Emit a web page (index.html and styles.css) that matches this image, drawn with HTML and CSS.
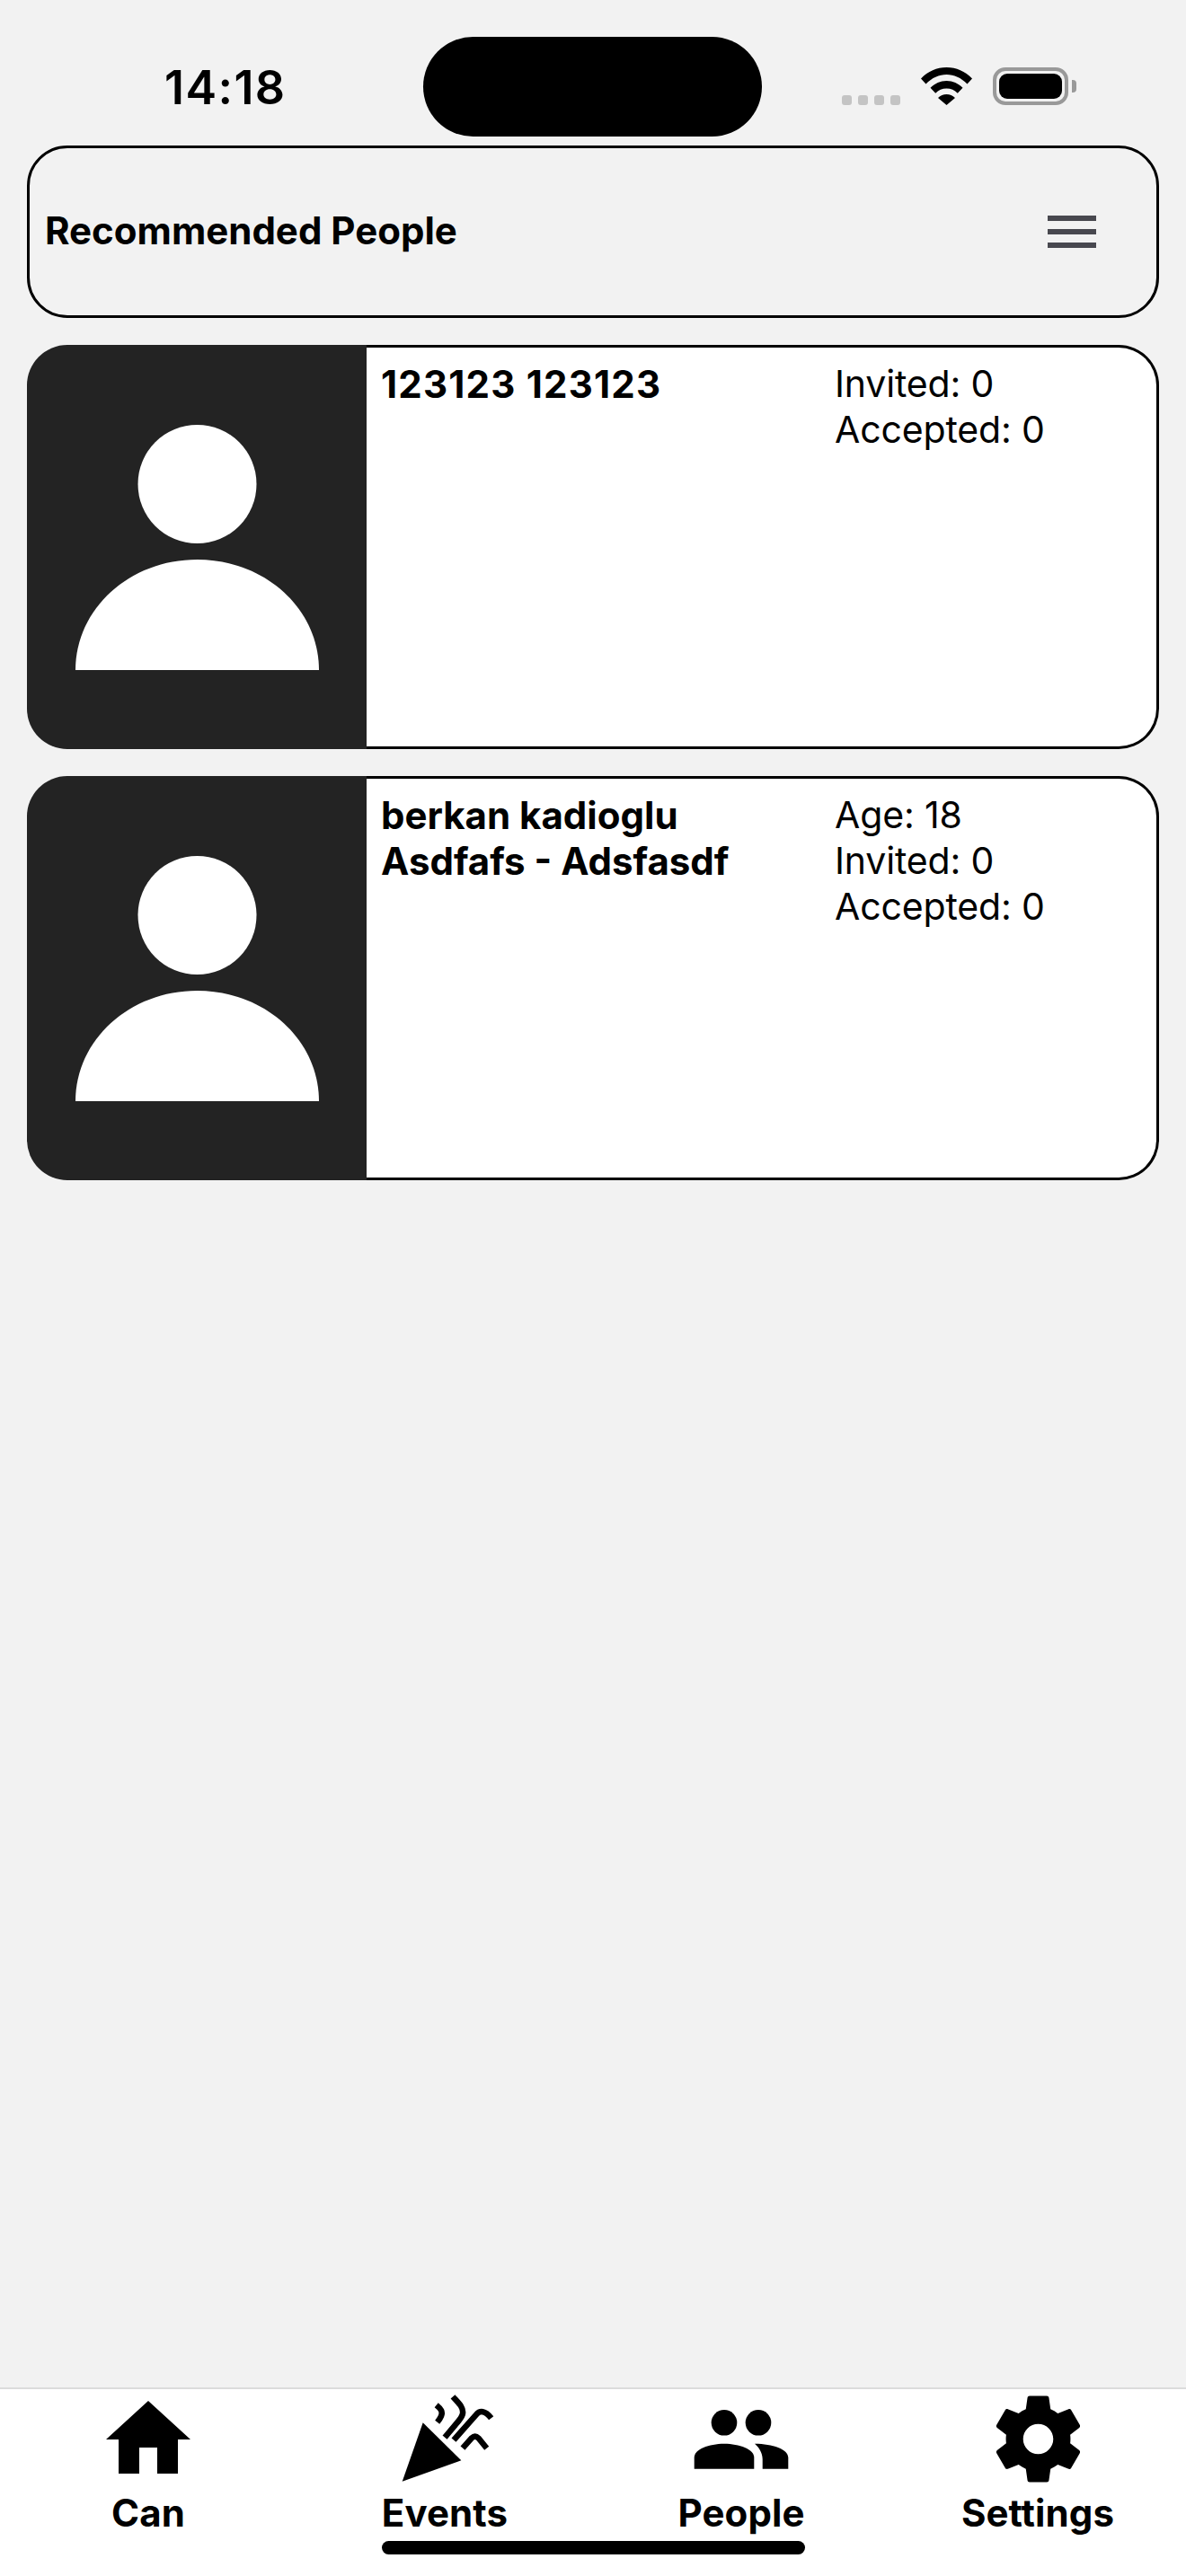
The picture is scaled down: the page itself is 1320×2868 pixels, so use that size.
FILE: index.html
```html
<!DOCTYPE html>
<html lang="en">
<head>
<meta charset="utf-8">
<title>Recommended People</title>
<link rel="stylesheet" href="styles.css">
</head>
<body>
<div class="app">
  <div class="status">
    <span class="time">14:18</span>
    <div class="island"></div>
    <div class="status-icons">
      <div class="dots"><i></i><i></i><i></i><i></i></div>
      <svg class="wifi" viewBox="0 0 57 42"><path d="M28.5 0C17.5 0 8 4.3 0 12.5l5.5 6C12.5 11.5 20 8 28.5 8s16 3.500 23 10.500l5.500-6C49 4.300 39.500 0 28.500 0zM28.500 15c-7 0-13 2.800-18 7.800l5.700 6C19.500 25.300 23.700 23.500 28.500 23.500s9 1.800 12.300 5.300l5.700-6c-5-5-11-7.800-18-7.800zM28.500 30c-3.700 0-6.800 1.300-9.500 4l9.500 8 9.500-8c-2.700-2.700-5.800-4-9.500-4z"/></svg>
      <div class="battery"><div class="battery-fill"></div></div>
      <div class="battery-nub"></div>
    </div>
  </div>

  <header class="title-bar">
    <h1>Recommended People</h1>
    <div class="menu"><i></i><i></i><i></i></div>
  </header>

  <main class="list">
    <article class="card">
      <div class="avatar">
        <svg viewBox="0 0 271 273"><ellipse cx="135.500" cy="66" rx="66" ry="66"/><path d="M0 273C0 205 60 150 135.500 150S271 205 271 273z"/></svg>
      </div>
      <div class="card-body">
        <div class="names"><p class="digits">123123 123123</p></div>
        <div class="stats"><p>Invited: 0</p><p>Accepted: 0</p></div>
      </div>
    </article>
    <article class="card">
      <div class="avatar">
        <svg viewBox="0 0 271 273"><ellipse cx="135.500" cy="66" rx="66" ry="66"/><path d="M0 273C0 205 60 150 135.500 150S271 205 271 273z"/></svg>
      </div>
      <div class="card-body">
        <div class="names"><p>berkan kadioglu</p><p>Asdfafs - Adsfasdf</p></div>
        <div class="stats"><p>Age: 18</p><p>Invited: 0</p><p>Accepted: 0</p></div>
      </div>
    </article>
  </main>

  <nav class="tabs">
    <div class="tab">
      <svg class="tab-icon" viewBox="0 0 120 100"><path d="M60 1 107 44H93V82H70V53H50V82H27V44H13z"/></svg>
      <span>Can</span>
    </div>
    <div class="tab">
      <svg class="tab-icon" viewBox="0 0 120 100"><path d="M35.700 25.300 78.300 67.300 12.700 90.700z"/><g class="streamers"><path d="M50.700 5.700C56 10 58 13 56 18C55 20.500 53.500 22.500 51.700 24.700"/><path d="M69-3.700C75 3 81 8 80 15C79.500 19 76 23 60 41.700"/><path d="M70 44.700 95 16.300C99 11.500 105 11.500 111.700 20.300"/><path d="M80 53.700 90 42.300C92.500 40 95 40 97.500 42.500L106.700 53.700"/></g></svg>
      <span>Events</span>
    </div>
    <div class="tab">
      <svg class="tab-icon" viewBox="0 0 120 100"><circle cx="41" cy="25.300" r="14.300"/><circle cx="79" cy="25.300" r="14.300"/><path d="M7.700 76.700V64C7.700 55 24 48.700 41 48.700S74.300 55 74.300 64V76.700z"/><path d="M75 48.700C95 48.700 112.300 55 112.300 64V76.700H83.700V66C83.700 59 80 53 75 48.700z"/></svg>
      <span>People</span>
    </div>
    <div class="tab">
      <svg class="tab-icon gear" viewBox="0 0 24 24"><path fill-rule="evenodd" d="M19.430 12.980c.04-.32.07-.64.07-.98s-.03-.66-.07-.98l2.110-1.650c.19-.15.24-.42.12-.64l-2-3.460c-.12-.22-.39-.3-.61-.22l-2.490 1c-.52-.4-1.080-.73-1.690-.98l-.38-2.650C14.460 2.180 14.250 2 14 2h-4c-.25 0-.46.18-.49.42l-.38 2.650c-.61.25-1.170.59-1.690.98l-2.490-1c-.23-.09-.49 0-.61.22l-2 3.460c-.13.22-.07.49.12.64l2.110 1.650c-.04.32-.07.65-.07.98s.03.66.07.98l-2.110 1.650c-.19.15-.24.42-.12.64l2 3.460c.12.22.39.3.61.22l2.490-1c.52.4 1.080.73 1.690.98l.38 2.650c.03.24.24.42.49.42h4c.25 0 .46-.18.49-.42l.38-2.650c.61-.25 1.170-.59 1.690-.98l2.490 1c.23.09.49 0 .61-.22l2-3.460c.12-.22.07-.49-.12-.64l-2.110-1.650zM12 15.500c-1.930 0-3.500-1.570-3.500-3.500s1.570-3.500 3.500-3.500 3.500 1.570 3.500 3.500-1.570 3.500-3.500 3.500z"/></svg>
      <span>Settings</span>
    </div>
    <div class="home-indicator"></div>
  </nav>
</div>
</body>
</html>
```

FILE: styles.css
```css
* { box-sizing: border-box; }
html, body { margin: 0; padding: 0; }
body { font-family: Inter, "Liberation Sans", sans-serif; color: #000; background: #f2f2f2; }
p, h1 { margin: 0; }

.app { width: 1320px; height: 2868px; display: flex; flex-direction: column; background: #f2f2f2; }

.status { height: 162px; flex: none; position: relative; }
.time { position: absolute; left: 183px; top: 66px; font-size: 52px; line-height: 63px; font-weight: 600; letter-spacing: 1.4px; }
.island { position: absolute; left: 471px; top: 41px; width: 377px; height: 111px; background: #000; border-radius: 56px; }
.status-icons { position: absolute; left: 937px; top: 75px; width: 261px; height: 42px; display: flex; align-items: flex-end; }
.dots { display: flex; gap: 7px; width: 65px; margin-right: 23px; }
.dots i { width: 11px; height: 11px; border-radius: 3px; background: #c4c4c4; }
.wifi { width: 57px; height: 42px; margin-right: 23px; flex: none; }
.battery { width: 84px; height: 42px; border: 4px solid #999; border-radius: 14px; padding: 3px; flex: none; }
.battery-fill { height: 100%; background: #000; border-radius: 9px; }
.battery-nub { width: 5px; height: 14px; margin: 0 0 14px 4px; background: #999; border-radius: 0 4px 4px 0; flex: none; }

.title-bar { margin: 0 30px; height: 192px; flex: none; border: 3px solid #000; border-radius: 45px; display: flex; align-items: center; justify-content: space-between; padding: 0 67px 4px 17px; }
.title-bar h1 { font-size: 42px; line-height: 51px; font-weight: 700; }
.menu { display: flex; flex-direction: column; gap: 9px; width: 54px; margin-top: 4px; }
.menu i { height: 6px; background: #48484f; }

.list { flex: 1; display: flex; flex-direction: column; gap: 30px; padding: 30px 30px 0; }
.card { height: 450px; display: flex; }
.avatar { width: 378px; flex: none; background: #232323; border-radius: 45px 0 0 45px; display: flex; justify-content: center; padding-top: 89px; }
.avatar svg { width: 271px; height: 273px; fill: #fff; }
.card-body { flex: 1; display: flex; background: #fff; border: 3px solid #000; border-left: 0; border-radius: 0 45px 45px 0; padding: 15px 0 0 16px; line-height: 51px; }
.names { width: 505px; font-size: 42px; font-weight: 700; }
.digits { letter-spacing: 1.2px; }
.stats { font-size: 41px; font-weight: 400; letter-spacing: -0.15px; }

.tabs { height: 210px; flex: none; background: #fff; border-top: 2px solid #dcdcdc; display: grid; grid-template-columns: repeat(4, 330px); position: relative; }
.tab { display: flex; flex-direction: column; align-items: center; font-size: 42px; line-height: 51px; font-weight: 700; letter-spacing: 0.1px; }
.tab-icon { width: 120px; height: 100px; margin-top: 12px; fill: #000; overflow: visible; flex: none; }
.gear { width: 115px; height: 115px; margin-top: -2px; margin-bottom: -1px; }
.streamers path { fill: none; stroke: #000; stroke-width: 6.500; }
.home-indicator { position: absolute; left: 425px; top: 169px; width: 471px; height: 15px; border-radius: 8px; background: #000; }
```
